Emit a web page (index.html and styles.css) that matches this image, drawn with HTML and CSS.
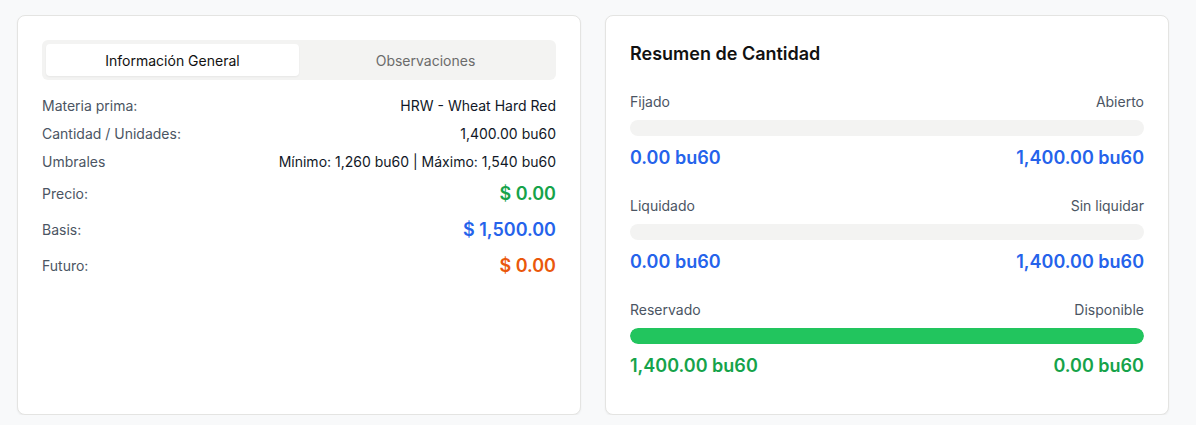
FILE: index.html
```html
<!DOCTYPE html>
<html lang="es">
<head>
<meta charset="utf-8">
<link rel="stylesheet" href="styles.css">
</head>
<body>
<div class="page">
  <section class="card card-info">
    <div class="tabs">
      <div class="tab active">Información General</div>
      <div class="tab">Observaciones</div>
    </div>
    <div class="rows">
      <div class="row"><span class="label">Materia prima:</span><span class="value">HRW - Wheat Hard Red</span></div>
      <div class="row"><span class="label">Cantidad / Unidades:</span><span class="value">1,400.00 bu60</span></div>
      <div class="row"><span class="label">Umbrales</span><span class="value">Mínimo: 1,260 bu60 | Máximo: 1,540 bu60</span></div>
      <div class="row"><span class="label">Precio:</span><span class="value big green">$ 0.00</span></div>
      <div class="row"><span class="label">Basis:</span><span class="value big blue">$ 1,500.00</span></div>
      <div class="row"><span class="label">Futuro:</span><span class="value big orange">$ 0.00</span></div>
    </div>
  </section>
  <section class="card card-summary">
    <h2 class="title">Resumen de Cantidad</h2>
    <div class="sections">
      <div class="sec">
        <div class="sec-labels"><span>Fijado</span><span>Abierto</span></div>
        <div class="bar"><div class="fill" style="width:0%"></div></div>
        <div class="sec-values blue"><span>0.00 bu60</span><span>1,400.00 bu60</span></div>
      </div>
      <div class="sec">
        <div class="sec-labels"><span>Liquidado</span><span>Sin liquidar</span></div>
        <div class="bar"><div class="fill" style="width:0%"></div></div>
        <div class="sec-values blue"><span>0.00 bu60</span><span>1,400.00 bu60</span></div>
      </div>
      <div class="sec">
        <div class="sec-labels"><span>Reservado</span><span>Disponible</span></div>
        <div class="bar"><div class="fill" style="width:100%"></div></div>
        <div class="sec-values green"><span>1,400.00 bu60</span><span>0.00 bu60</span></div>
      </div>
    </div>
  </section>
</div>
</body>
</html>
```
FILE: styles.css
```css
* { box-sizing: border-box; }
html, body { margin: 0; padding: 0; }
body {
  background: #f8f9fa;
  font-family: Inter, "Liberation Sans", sans-serif;
  color: #111827;
}
.page {
  width: 1152px;
  margin: 15px 0 0 17px;
  display: grid;
  grid-template-columns: 1fr 1fr;
  gap: 24px;
  align-items: stretch;
}
.card {
  background: #fff;
  border: 1px solid #e4e4e2;
  border-radius: 8px;
  box-shadow: 0 1px 2px rgba(0,0,0,0.06);
  padding: 24px;
}
.card-summary { padding-bottom: 34px; }
.tabs {
  height: 40px;
  background: #f3f3f2;
  border-radius: 6px;
  padding: 4px;
  display: grid;
  grid-template-columns: 1fr 1fr;
}
.tab {
  display: flex;
  align-items: center;
  justify-content: center;
  font-size: 14px;
  font-weight: 400;
  color: #6b6b6b;
  border-radius: 4px;
}
.tab.active {
  background: #fff;
  color: #111;
  box-shadow: 0 1px 2px rgba(0,0,0,0.05);
}
.rows {
  margin-top: 16px;
  display: flex;
  flex-direction: column;
  gap: 8px;
}
.row {
  display: flex;
  justify-content: space-between;
  align-items: center;
}
.label {
  font-size: 14px;
  line-height: 20px;
  color: #4b5563;
}
.value {
  font-size: 14px;
  line-height: 20px;
  color: #111827;
  font-weight: 400;
}
.value.big {
  font-size: 18px;
  line-height: 28px;
  font-weight: 600;
}
.green { color: #16a34a; }
.blue { color: #2563eb; }
.orange { color: #ea580c; }
.title {
  margin: 0 0 24px;
  font-size: 18px;
  line-height: 28px;
  font-weight: 600;
  color: #111;
}
.sections {
  display: flex;
  flex-direction: column;
  gap: 24px;
}
.sec-labels {
  display: flex;
  justify-content: space-between;
  font-size: 14px;
  line-height: 20px;
  color: #4b5563;
}
.bar {
  margin-top: 8px;
  height: 16px;
  background: #f3f3f2;
  border-radius: 999px;
  overflow: hidden;
}
.fill {
  height: 100%;
  background: #22c55e;
  border-radius: 999px;
}
.sec-values {
  margin-top: 8px;
  display: flex;
  justify-content: space-between;
  font-size: 18px;
  line-height: 28px;
  font-weight: 600;
}
```
